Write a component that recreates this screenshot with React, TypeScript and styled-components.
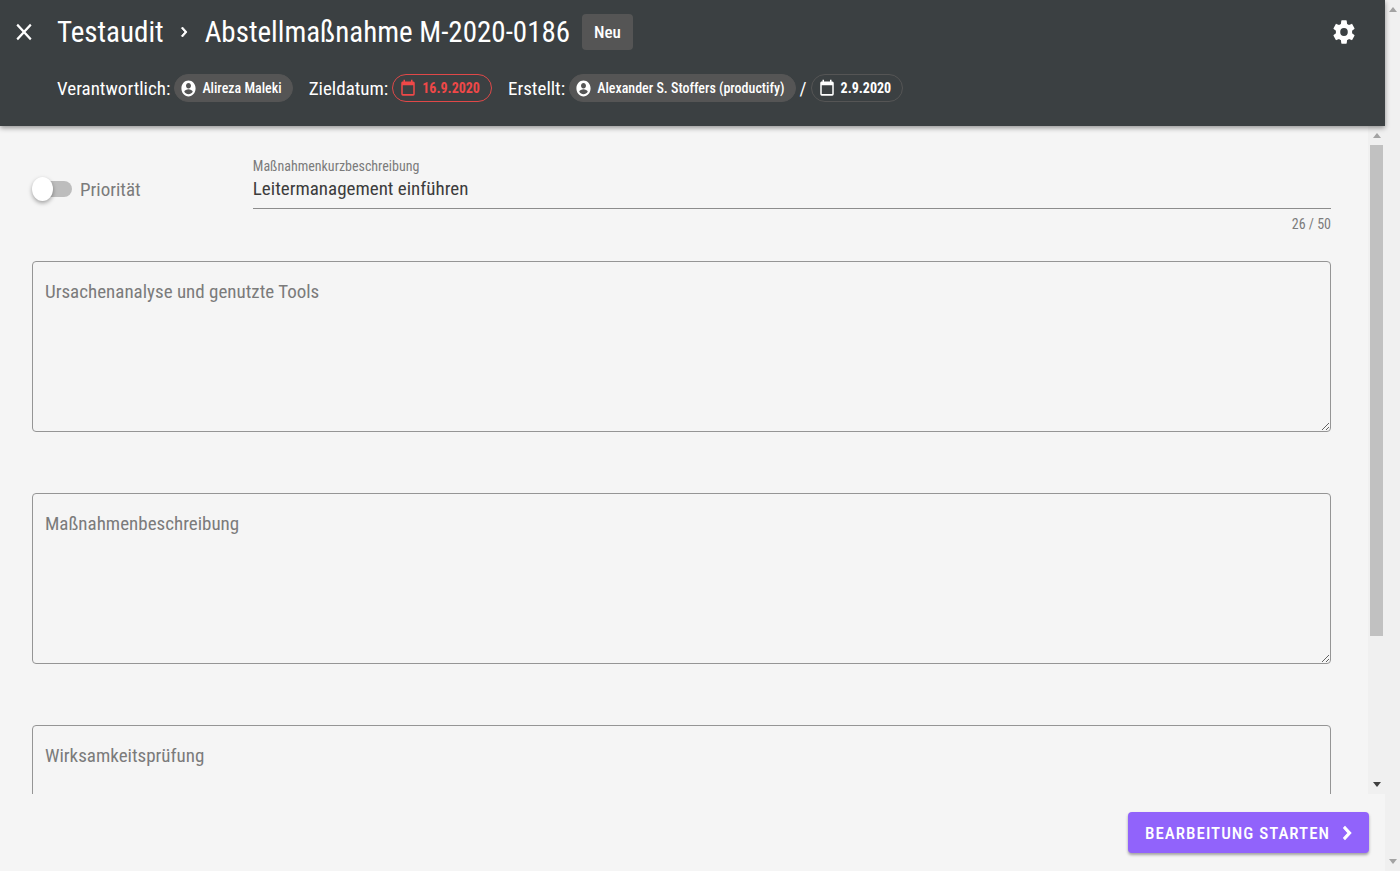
import React from "react";
import styled, { createGlobalStyle, css } from "styled-components";

const GlobalStyle = createGlobalStyle`
  *, *::before, *::after { box-sizing: border-box; }
  body {
    margin: 0;
    background: #f5f5f5;
    color: #3c3c3c;
    font-family: "Roboto Condensed", Roboto, "Liberation Sans", sans-serif;
  }
  button, input, textarea { font: inherit; color: inherit; }
`;

const Window = styled.div`
  display: flex;
  height: 100vh;
  overflow: hidden;
`;

const Page = styled.div`
  flex: 1;
  min-width: 0;
  display: flex;
  flex-direction: column;
  background: #f5f5f5;
`;

const Header = styled.header`
  position: relative;
  display: flex;
  flex-direction: column;
  gap: 22px;
  padding: 12px 28px 24px 11px;
  background: #3b4042;
  color: #fff;
  box-shadow: 0 2px 5px rgba(0, 0, 0, 0.4);
`;

const TitleBar = styled.div`
  display: flex;
  align-items: center;
  height: 40px;
`;

const IconButton = styled.button`
  display: flex;
  align-items: center;
  justify-content: center;
  width: 26px;
  height: 28px;
  padding: 0;
  border: 0;
  background: none;
  cursor: pointer;
`;

const Breadcrumb = styled.nav`
  flex: 1;
  display: flex;
  align-items: center;
  margin-left: 20px;
`;

const titleText = css`
  font-size: 29px;
  line-height: 32px;
  font-weight: 400;
`;

const Title = styled.h1`
  margin: 0;
  ${titleText}
`;

const Crumb = styled.a`
  color: inherit;
  text-decoration: none;
  ${titleText}
`;

const Separator = styled.span`
  display: flex;
  justify-content: center;
  width: 41px;
`;

const Status = styled.span`
  margin-left: 12px;
  padding: 0 12px;
  border-radius: 4px;
  background: #555;
  font-size: 17px;
  line-height: 36px;
  font-weight: 500;
`;

const Meta = styled.div`
  display: flex;
  align-items: center;
  gap: 16px;
  height: 28px;
  margin-left: 46px;
`;

const MetaItem = styled.div`
  display: flex;
  align-items: center;
  gap: 4px;
  font-size: 19px;
  font-weight: 400;
`;

const Chip = styled.span<{ $tone: "filled" | "outlined" | "alert" }>`
  display: flex;
  align-items: center;
  gap: 5px;
  height: 28px;
  padding: 0 10px 0 5px;
  border: 1px solid #555;
  border-radius: 14px;
  font-size: 14px;
  font-weight: 500;
  ${({ $tone }) => $tone === "filled" && css`background: #555;`}
  ${({ $tone }) => $tone !== "filled" && css`padding: 0 11px 0 6px; font-weight: 700;`}
  ${({ $tone }) => $tone === "alert" && css`border-color: #e04848; color: #f04848;`}
`;

const Body = styled.div`
  flex: 1;
  min-height: 0;
  display: flex;
`;

const Form = styled.main`
  flex: 1;
  min-width: 0;
  overflow: hidden;
  padding: 30px 37px 0 32px;
`;

const TopRow = styled.div`
  display: flex;
  height: 105px;
`;

const Switch = styled.label`
  display: flex;
  align-items: center;
  gap: 8px;
  flex: 0 0 17%;
  height: 66px;
  font-size: 19px;
  color: #7b7b7b;
`;

const SwitchInput = styled.input`
  appearance: none;
  flex: none;
  width: 40px;
  height: 16px;
  margin: 0;
  border-radius: 8px;
  background: linear-gradient(90deg, transparent 8px, #bdbdbd 8px);

  &::before {
    content: "";
    display: block;
    width: 21px;
    height: 24px;
    margin-top: -4px;
    border-radius: 50%;
    background: #fff;
    box-shadow: 0 2px 4px rgba(0, 0, 0, 0.35);
  }
  &:checked::before { margin-left: 19px; }
`;

const TextField = styled.div`
  flex: 1;
  display: flex;
  flex-direction: column;
`;

const FieldLabel = styled.label`
  font-size: 14px;
  line-height: 20px;
  color: #7b7b7b;
`;

const TextInput = styled.input`
  width: 100%;
  height: 33px;
  padding: 0 0 7px;
  border: 0;
  border-bottom: 1px solid #8c8c8c;
  border-radius: 0;
  outline: 0;
  background: none;
  font-size: 19px;
`;

const Counter = styled.span`
  align-self: flex-end;
  margin-top: 5px;
  font-size: 14px;
  line-height: 20px;
  color: #7b7b7b;
`;

const AreaInput = styled.textarea`
  display: block;
  width: 100%;
  height: 171px;
  margin-bottom: 61px;
  padding: 18px 12px;
  border: 1px solid #959595;
  border-radius: 4px;
  outline: 0;
  background: none;
  font-size: 19px;
  line-height: 24px;
  resize: vertical;

  &::placeholder { color: #7b7b7b; opacity: 1; }
`;

const Footer = styled.footer`
  display: flex;
  justify-content: flex-end;
  padding: 18px 16px;
`;

const PrimaryButton = styled.button`
  display: flex;
  align-items: center;
  gap: 5px;
  height: 41px;
  padding: 0 10px 0 17px;
  border: 0;
  border-radius: 4px;
  background: #9163fb;
  box-shadow: 0 2px 3px rgba(0, 0, 0, 0.35);
  color: #fff;
  font-size: 17px;
  font-weight: 500;
  letter-spacing: 1px;
  text-transform: uppercase;
  cursor: pointer;
`;

const Track = styled.div<{ $width: number }>`
  flex: none;
  display: flex;
  flex-direction: column;
  align-items: center;
  width: ${({ $width }) => $width}px;
  background: #f0f0f0;
`;

const Thumb = styled.div`
  flex: 39;
  width: 13px;
  background: #c1c1c1;
`;

const Spacer = styled.div`
  flex: 11;
`;

const ArrowBox = styled.span`
  flex: none;
  display: flex;
  align-items: center;
  justify-content: center;
  height: 19px;
`;

type IconProps = { d: string; width?: number; height?: number; stroke?: number };

function Icon({ d, width = 20, height = 20, stroke = 0 }: IconProps) {
  return (
    <svg
      width={width}
      height={height}
      viewBox="0 0 24 24"
      preserveAspectRatio="none"
      fill="currentColor"
      stroke="currentColor"
      strokeWidth={stroke}
      aria-hidden="true"
    >
      <path d={d} />
    </svg>
  );
}

const closePath =
  "M19 6.41 17.59 5 12 10.59 6.41 5 5 6.41 10.59 12 5 17.59 6.41 19 12 13.41 17.59 19 19 17.59 13.41 12z";
const chevronPath = "M8.59 16.58 13.17 12 8.59 7.41 10 6l6 6-6 6z";
const accountPath =
  "M12 2C6.48 2 2 6.48 2 12s4.48 10 10 10 10-4.48 10-10S17.52 2 12 2zm0 3c1.93 0 3.5 1.57 3.5 3.5S13.93 12 12 12s-3.5-1.57-3.5-3.5S10.07 5 12 5zm0 14.2c-2.5 0-4.71-1.28-6-3.22.03-1.99 4-3.08 6-3.08 1.99 0 5.97 1.09 6 3.08-1.29 1.94-3.5 3.22-6 3.22z";
const calendarPath =
  "M19 19H5V8h14m-3-7v2H8V1H6v2H5c-1.11 0-2 .89-2 2v14a2 2 0 0 0 2 2h14a2 2 0 0 0 2-2V5a2 2 0 0 0-2-2h-1V1";
const cogPath =
  "M12 15.5A3.5 3.5 0 0 1 8.5 12 3.5 3.5 0 0 1 12 8.5a3.5 3.5 0 0 1 3.5 3.5 3.5 3.5 0 0 1-3.5 3.5m7.43-2.53c.04-.32.07-.64.07-.97s-.03-.66-.07-1l2.11-1.63c.19-.15.24-.42.12-.64l-2-3.46c-.12-.22-.39-.31-.61-.22l-2.49 1c-.52-.39-1.06-.73-1.69-.98l-.37-2.65A.506.506 0 0 0 14 2h-4c-.25 0-.46.18-.5.42l-.37 2.65c-.63.25-1.17.59-1.69.98l-2.49-1c-.22-.09-.49 0-.61.22l-2 3.46c-.13.22-.07.49.12.64L4.57 11c-.04.34-.07.67-.07 1s.03.65.07.97l-2.11 1.66c-.19.15-.25.42-.12.64l2 3.46c.12.22.39.3.61.22l2.49-1.01c.52.4 1.06.74 1.69.99l.37 2.65c.04.24.25.42.5.42h4c.25 0 .46-.18.5-.42l.37-2.65c.63-.26 1.17-.59 1.69-.99l2.49 1.01c.22.08.49 0 .61-.22l2-3.46c.12-.22.07-.49-.12-.64z";

function Arrow({ down, color }: { down?: boolean; color: string }) {
  return (
    <ArrowBox>
      <svg width="8" height="5" viewBox="0 0 8 5" fill={color} aria-hidden="true">
        <path d={down ? "M0 0h8L4 5z" : "M0 5h8L4 0z"} />
      </svg>
    </ArrowBox>
  );
}

function Person({ name }: { name: string }) {
  return (
    <Chip $tone="filled">
      <Icon d={accountPath} width={17} height={19} />
      {name}
    </Chip>
  );
}

function DateChip({ date, alert }: { date: string; alert?: boolean }) {
  return (
    <Chip $tone={alert ? "alert" : "outlined"}>
      <Icon d={calendarPath} width={18} height={19} />
      {date}
    </Chip>
  );
}

const areas = ["Ursachenanalyse und genutzte Tools", "Maßnahmenbeschreibung", "Wirksamkeitsprüfung"];

export default function App() {
  const [summary, setSummary] = React.useState("Leitermanagement einführen");

  return (
    <Window>
      <GlobalStyle />
      <Page>
        <Header>
          <TitleBar>
            <IconButton aria-label="Schließen">
              <Icon d={closePath} width={26} height={28} />
            </IconButton>
            <Breadcrumb>
              <Crumb href="#">Testaudit</Crumb>
              <Separator>
                <Icon d={chevronPath} width={18} height={20} stroke={1} />
              </Separator>
              <Title>Abstellmaßnahme M-2020-0186</Title>
              <Status>Neu</Status>
            </Breadcrumb>
            <IconButton aria-label="Einstellungen">
              <Icon d={cogPath} width={26} height={28} />
            </IconButton>
          </TitleBar>
          <Meta>
            <MetaItem>
              Verantwortlich:
              <Person name="Alireza Maleki" />
            </MetaItem>
            <MetaItem>
              Zieldatum:
              <DateChip date="16.9.2020" alert />
            </MetaItem>
            <MetaItem>
              Erstellt:
              <Person name="Alexander S. Stoffers (productify)" />
              /
              <DateChip date="2.9.2020" />
            </MetaItem>
          </Meta>
        </Header>
        <Body>
          <Form>
            <TopRow>
              <Switch>
                <SwitchInput type="checkbox" />
                Priorität
              </Switch>
              <TextField>
                <FieldLabel htmlFor="summary">Maßnahmenkurzbeschreibung</FieldLabel>
                <TextInput
                  id="summary"
                  maxLength={50}
                  value={summary}
                  onChange={(e) => setSummary(e.target.value)}
                />
                <Counter>{summary.length} / 50</Counter>
              </TextField>
            </TopRow>
            {areas.map((label) => (
              <AreaInput key={label} aria-label={label} placeholder={label} />
            ))}
          </Form>
          <Track $width={17}>
            <Arrow color="#a3a3a3" />
            <Thumb />
            <Spacer />
            <Arrow down color="#404040" />
          </Track>
        </Body>
        <Footer>
          <PrimaryButton>
            Bearbeitung starten
            <Icon d={chevronPath} width={24} height={26} stroke={1} />
          </PrimaryButton>
        </Footer>
      </Page>
      <Track $width={15}>
        <Arrow color="#a3a3a3" />
        <Spacer />
        <Arrow down color="#a3a3a3" />
      </Track>
    </Window>
  );
}
